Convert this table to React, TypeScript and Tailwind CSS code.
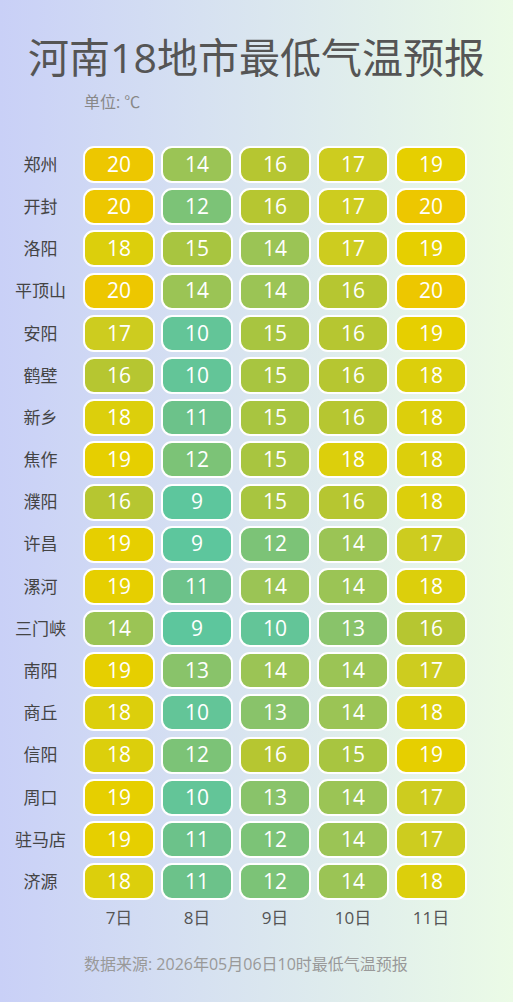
const cities: [string, number[]][] = [
  ["郑州", [20, 14, 16, 17, 19]],
  ["开封", [20, 12, 16, 17, 20]],
  ["洛阳", [18, 15, 14, 17, 19]],
  ["平顶山", [20, 14, 14, 16, 20]],
  ["安阳", [17, 10, 15, 16, 19]],
  ["鹤壁", [16, 10, 15, 16, 18]],
  ["新乡", [18, 11, 15, 16, 18]],
  ["焦作", [19, 12, 15, 18, 18]],
  ["濮阳", [16, 9, 15, 16, 18]],
  ["许昌", [19, 9, 12, 14, 17]],
  ["漯河", [19, 11, 14, 14, 18]],
  ["三门峡", [14, 9, 10, 13, 16]],
  ["南阳", [19, 13, 14, 14, 17]],
  ["商丘", [18, 10, 13, 14, 18]],
  ["信阳", [18, 12, 16, 15, 19]],
  ["周口", [19, 10, 13, 14, 17]],
  ["驻马店", [19, 11, 12, 14, 17]],
  ["济源", [18, 11, 12, 14, 18]],
];

const days = ["7日", "8日", "9日", "10日", "11日"];

// temperature -> cell colour
const tempColor: Record<number, string> = {
  20: "bg-[#edc700]",
  19: "bg-[#e6cf00]",
  18: "bg-[#dccf0c]",
  17: "bg-[#cdcc1f]",
  16: "bg-[#b6c631]",
  15: "bg-[#a8c540]",
  14: "bg-[#9bc455]",
  13: "bg-[#89c36a]",
  12: "bg-[#7cc377]",
  11: "bg-[#6cc28a]",
  10: "bg-[#63c598]",
  9: "bg-[#5dc69d]",
};

export default function App() {
  return (
    <div
      className="w-[513px] h-[1002px] bg-gradient-to-r from-[#c9d0f7] to-[#ebfbe6] text-[#444]"
      style={{ fontFamily: '"Open Sans", "Noto Sans CJK SC", sans-serif' }}
    >
      <h1 className="pt-[33px] text-center text-[41px] leading-[48px] text-[#555]">
        河南18地市最低气温预报
      </h1>
      <p className="mt-[11px] pl-[84px] text-[16px] leading-[20px] text-[#888]">单位: ℃</p>

      <div className="mt-[34px] grid grid-cols-[77px_repeat(5,72px)] gap-x-[6px] gap-y-[5.2px]">
        {cities.map(([name, temps]) => (
          <div key={name} className="contents">
            <div className="flex h-[37px] items-center justify-center pl-[4px] text-[17px]">
              {name}
            </div>
            {temps.map((t, i) => (
              <div
                key={i}
                className={`flex h-[37px] items-center justify-center rounded-[11px] border-2 border-white text-[21px] text-white ${tempColor[t]}`}
              >
                {t}
              </div>
            ))}
          </div>
        ))}
        <div />
        {days.map((d) => (
          <div key={d} className="mt-[1px] text-center text-[17px] leading-[24px] text-[#555]">
            {d}
          </div>
        ))}
      </div>

      <p className="mt-[24px] pl-[84px] text-[16px] leading-[20px] text-[#999]">
        数据来源: 2026年05月06日10时最低气温预报
      </p>
    </div>
  );
}
